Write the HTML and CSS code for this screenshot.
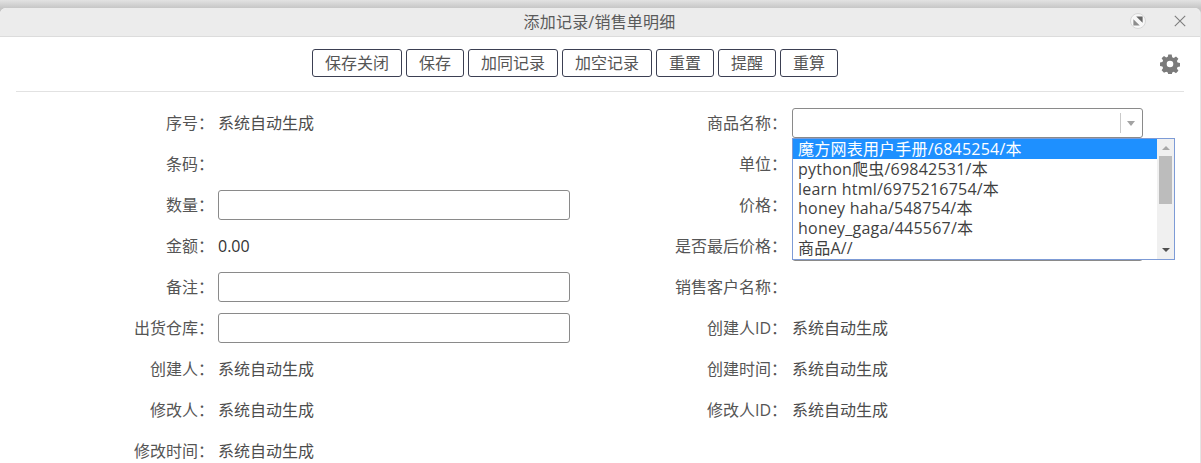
FILE: index.html
```html
<!DOCTYPE html>
<html lang="zh">
<head>
<meta charset="utf-8">
<title>添加记录/销售单明细</title>
<link rel="stylesheet" href="styles.css">
</head>
<body>
<div class="dialog">
  <header class="titlebar">
    <span class="title">添加记录/销售单明细</span>
    <div class="win-actions">
      <svg class="restore" width="16" height="16" viewBox="0 0 16 16"><circle cx="8" cy="8" r="7.5" fill="#f7f7f7" stroke="#d6d6d6"/><path d="M3.4 6.2 9.8 12.6H3.4Z" fill="#8c8c8c"/><path d="M6.2 3.4H12.6V9.8Z" fill="#666"/></svg>
      <svg class="close" width="12" height="12" viewBox="0 0 12 12"><path d="M.8.8 11.2 11.2M11.2.8.8 11.2" stroke="#7d7d7d" stroke-width="1.1" fill="none"/></svg>
    </div>
  </header>
  <div class="toolbar">
    <div class="buttons">
      <button class="btn">保存关闭</button>
      <button class="btn">保存</button>
      <button class="btn">加同记录</button>
      <button class="btn">加空记录</button>
      <button class="btn">重置</button>
      <button class="btn">提醒</button>
      <button class="btn">重算</button>
    </div>
    <svg class="gear" width="20" height="20" viewBox="0 0 20 20"><path fill-rule="evenodd" fill="#7b7b7b" d="M8.3.6h3.4l.5 2.6 1.6.7 2.2-1.5 2.4 2.4-1.5 2.2.7 1.6 2.6.5v3.4l-2.6.5-.7 1.6 1.5 2.2-2.4 2.4-2.2-1.5-1.6.7-.5 2.6H8.3l-.5-2.6-1.6-.7L4 18.7l-2.4-2.4 1.5-2.2-.7-1.6-2.6-.5V8.6l2.6-.5.7-1.6L1.6 4.3 4 1.9l2.2 1.5 1.6-.7ZM10 6.7a3.3 3.3 0 1 0 0 6.6 3.3 3.3 0 0 0 0-6.6Z"/></svg>
  </div>
  <form class="form">
    <div class="field"><label class="lbl">序号：</label><span class="val">系统自动生成</span></div>
    <div class="field right"><label class="lbl">商品名称：</label>
      <div class="combo">
        <div class="select"><span class="sep"></span><span class="arrow"></span></div>
        <div class="listbox">
          <ul class="options">
            <li class="opt active">魔方网表用户手册/6845254/本</li>
            <li class="opt">python爬虫/69842531/本</li>
            <li class="opt">learn html/6975216754/本</li>
            <li class="opt">honey haha/548754/本</li>
            <li class="opt">honey_gaga/445567/本</li>
            <li class="opt">商品A//</li>
          </ul>
          <div class="scrollbar">
            <span class="up"></span>
            <span class="thumb"></span>
            <span class="down"></span>
          </div>
        </div>
      </div>
    </div>
    <div class="field"><label class="lbl">条码：</label><span class="val"></span></div>
    <div class="field right"><label class="lbl">单位：</label><span class="val"></span></div>
    <div class="field"><label class="lbl">数量：</label><input class="input" type="text"></div>
    <div class="field right"><label class="lbl">价格：</label><input class="input" type="text"></div>
    <div class="field"><label class="lbl">金额：</label><span class="val num">0.00</span></div>
    <div class="field right"><label class="lbl">是否最后价格：</label><input class="input" type="text"></div>
    <div class="field"><label class="lbl">备注：</label><input class="input" type="text"></div>
    <div class="field right"><label class="lbl">销售客户名称：</label><span class="val"></span></div>
    <div class="field"><label class="lbl">出货仓库：</label><input class="input" type="text"></div>
    <div class="field right"><label class="lbl">创建人ID：</label><span class="val">系统自动生成</span></div>
    <div class="field"><label class="lbl">创建人：</label><span class="val">系统自动生成</span></div>
    <div class="field right"><label class="lbl">创建时间：</label><span class="val">系统自动生成</span></div>
    <div class="field"><label class="lbl">修改人：</label><span class="val">系统自动生成</span></div>
    <div class="field right"><label class="lbl">修改人ID：</label><span class="val">系统自动生成</span></div>
    <div class="field"><label class="lbl">修改时间：</label><span class="val">系统自动生成</span></div>
  </form>
</div>
</body>
</html>
```
FILE: styles.css
```css
* { box-sizing: border-box; }
html, body { margin: 0; padding: 0; height: 463px; overflow: hidden; background: #fff; }
body {
  font-family: "Open Sans", "Noto Sans CJK SC", sans-serif;
  font-size: 16px;
  color: #555;
  padding-top: 8px;
  background: linear-gradient(#e2e2e2, #c6c6c6 8px, #c6c6c6 14px, #fff 14px);
}
.dialog {
  background: #fff;
  border-radius: 6px 6px 0 0;
  border-right: 1px solid #e4e4e4;
  height: 455px;
  overflow: hidden;
}
.titlebar {
  height: 29px;
  background: #ececec;
  border-bottom: 1px solid #dcdcdc;
  display: flex;
  align-items: center;
  justify-content: center;
  position: relative;
}
.title { font-size: 16px; color: #5a5a5a; line-height: 28px; letter-spacing: .2px; margin-right: 1px; }
.win-actions {
  position: absolute;
  right: 14px;
  top: 5px;
  display: flex;
  align-items: center;
  gap: 28px;
}
.toolbar {
  height: 55px;
  margin: 0 16px;
  border-bottom: 1px solid #e2e2e2;
  display: flex;
  align-items: flex-start;
  justify-content: center;
  position: relative;
}
.buttons { display: flex; gap: 4px; padding-top: 12px; margin-right: 50px; }
.btn {
  height: 28px;
  width: 58px;
  padding: 0;
  background: #fff;
  border: 1px solid #3b3f52;
  border-radius: 3px;
  font: inherit;
  color: #555;
  line-height: 26px;
  white-space: nowrap;
}
.btn:nth-child(1), .btn:nth-child(3), .btn:nth-child(4) { width: 90px; }
.gear { position: absolute; right: 4px; top: 17px; }
.form {
  display: grid;
  grid-template-columns: 570px 573px;
  grid-auto-rows: 41px;
  padding-top: 10px;
}
.field { display: flex; align-items: center; height: 41px; position: relative; }
.lbl { width: 214px; flex: none; text-align: right; white-space: nowrap; margin-right: 4px; line-height: 20px; }
.right .lbl { width: 217px; margin-right: 5px; }
.val { white-space: nowrap; line-height: 20px; color: #4d4d4d; }
.num { color: #333; }
.input {
  flex: 1;
  min-width: 0;
  height: 30px;
  margin-top: 1px;
  border: 1px solid #8a8a8a;
  border-radius: 3px;
  background: #fff;
  padding: 0 6px;
  font: inherit;
}
.combo { flex: 1; position: relative; height: 30px; margin-top: 1px; }
.select {
  height: 30px;
  border: 1px solid #8a8a8a;
  border-radius: 3px;
  background: #fff;
  position: relative;
}
.sep { position: absolute; right: 21px; top: 4px; height: 20px; width: 1px; background: #c9c9c9; }
.arrow {
  position: absolute;
  right: 7px;
  top: 12px;
  border-left: 4px solid transparent;
  border-right: 4px solid transparent;
  border-top: 5px solid #a3a3a3;
}
.listbox {
  position: absolute;
  z-index: 5;
  left: 0;
  top: 30px;
  width: 383px;
  height: 122px;
  background: #fff;
  border: 1px solid #7d9bd6;
  display: flex;
  overflow: hidden;
}
.options { list-style: none; margin: 0; padding: 0; flex: 1; min-width: 0; }
.opt {
  height: 19.7px;
  line-height: 20px;
  padding-left: 5px;
  color: #3f3f3f;
  white-space: nowrap;
  letter-spacing: .22px;
}
.opt.active { height: 20px; background: #1e90ff; color: #fff; }
.scrollbar {
  width: 17px;
  flex: none;
  background: #f0f0f0;
  display: flex;
  flex-direction: column;
  align-items: center;
  position: relative;
}
.up {
  margin-top: 7px;
  border-left: 4px solid transparent;
  border-right: 4px solid transparent;
  border-bottom: 4px solid #a8a8a8;
}
.thumb { width: 13px; height: 48px; margin-top: 6px; background: #bcbcbc; }
.down {
  position: absolute;
  bottom: 7px;
  border-left: 4px solid transparent;
  border-right: 4px solid transparent;
  border-top: 4px solid #505050;
}
```
